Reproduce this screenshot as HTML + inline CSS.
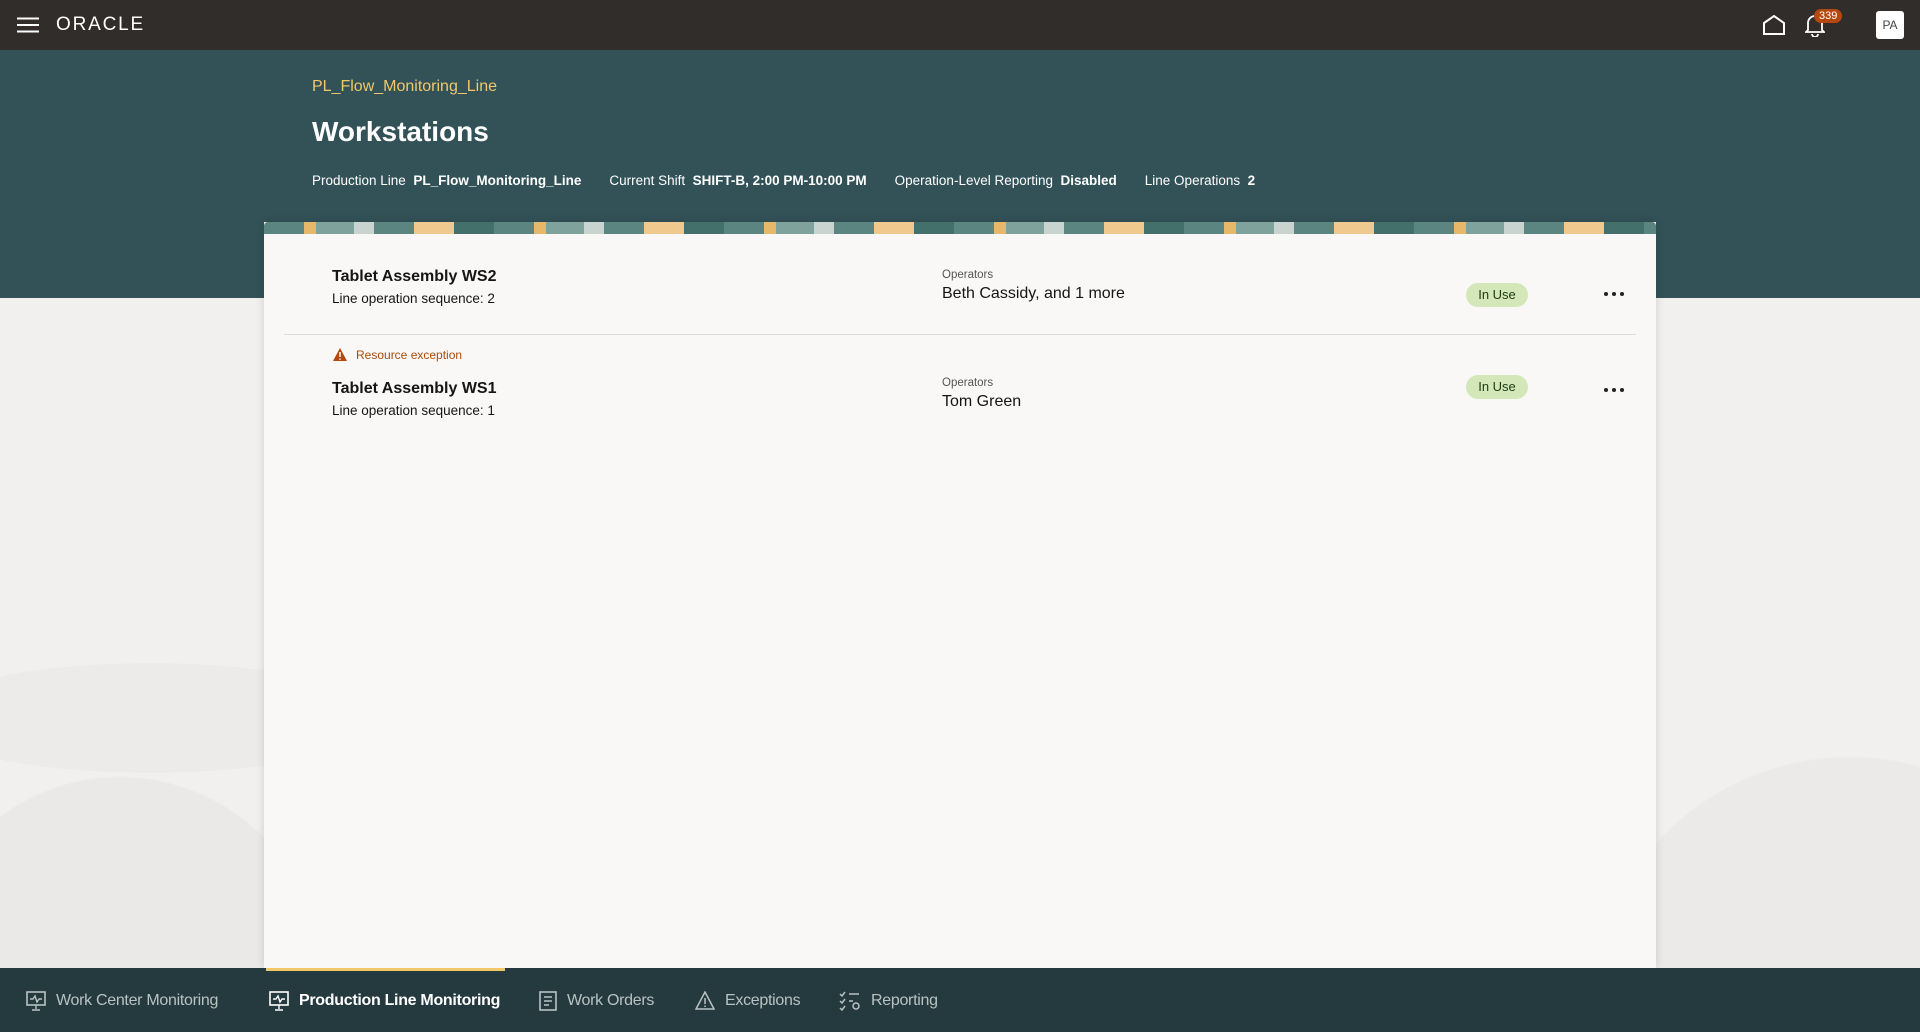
<!DOCTYPE html>
<html><head><meta charset="utf-8"><style>
*{box-sizing:border-box;margin:0;padding:0}
body{width:1920px;height:1032px;overflow:hidden;font-family:"Liberation Sans",sans-serif;background:#efeeec;position:relative}
.hdr{position:absolute;top:0;left:0;width:1920px;height:50px;background:#312d2a}
.band{position:absolute;top:50px;left:0;width:1920px;height:248px;background:#325258}
.bg{position:absolute;top:298px;left:0;width:1920px;height:670px;background:
radial-gradient(circle at 120px 680px,#eae9e7 0,#eae9e7 200px,transparent 202px),
radial-gradient(circle at 1850px 720px,#ebeae8 0,#ebeae8 260px,transparent 262px),
radial-gradient(ellipse at 150px 420px,#ecebe9 0,#ecebe9 230px,transparent 232px),#f1f0ee}
.t{position:absolute;white-space:nowrap}
.card{position:absolute;left:264px;top:222px;width:1392px;height:746px;background:#f9f8f6;box-shadow:0 0 8px rgba(0,0,0,.15)}
.ban{position:absolute;left:264px;top:222px;width:1392px;height:12px;background:repeating-linear-gradient(90deg,#5b8580 0 40px,#e8b86a 40px 52px,#7fa29d 52px 90px,#c9d3d0 90px 110px,#5b8580 110px 150px,#f0c98f 150px 190px,#44706b 190px 230px);border-radius:4px 4px 0 0}
.badge{position:absolute;width:62px;height:24px;border-radius:12px;background:#d4e7b8;color:#1d3a12;font-size:13px;text-align:center;line-height:24px}
.dots{position:absolute;width:22px;height:6px}
.dots i{position:absolute;top:0;width:4px;height:4px;border-radius:50%;background:#222}
.nav{position:absolute;top:968px;left:0;width:1920px;height:64px;background:#253a3f}
.ni{position:absolute;top:23px;font-size:16px;letter-spacing:-0.3px;color:#b9c2c3;display:flex;align-items:center;gap:10px;white-space:nowrap}
.ni.a{color:#fff;font-weight:bold}
</style></head><body>
<div class="hdr">
<svg style="position:absolute;left:17px;top:17px" width="22" height="16"><path d="M0 1.5h22M0 8h22M0 14.5h22" stroke="#fff" stroke-width="2"/></svg>
<div class="t" style="left:56px;top:14px;color:#fff;font-size:19px;letter-spacing:1.8px">ORACLE</div>
<svg style="position:absolute;left:1763px;top:15px" width="22" height="20"><path d="M1 19V8L11 1l10 7v11z" fill="none" stroke="#fff" stroke-width="2"/></svg>
<svg style="position:absolute;left:1805px;top:13px" width="20" height="24"><path d="M3 17V10a7 7 0 0 1 14 0v7l2 2H1z M7 21a3 3 0 0 0 6 0" fill="none" stroke="#fff" stroke-width="1.8"/></svg>
<div class="t" style="left:1814px;top:9px;background:#b5480f;color:#fff;font-size:11px;border-radius:8px;padding:1px 5px">339</div>
<div class="t" style="left:1876px;top:11px;width:28px;height:28px;background:#fff;border-radius:3px;color:#444;font-size:12px;text-align:center;line-height:28px">PA</div>
</div>
<div class="band"></div>
<div class="bg"></div>
<div class="t" style="left:312px;top:78px;color:#f0c86a;font-size:16px">PL_Flow_Monitoring_Line</div>
<div class="t" style="left:312px;top:116px;color:#fff;font-size:28px;font-weight:bold">Workstations</div>
<div class="t" style="left:312px;top:173px;color:#fff;font-size:13.5px">Production Line&nbsp;&nbsp;<b>PL_Flow_Monitoring_Line</b><span style="display:inline-block;width:28px"></span>Current Shift&nbsp;&nbsp;<b>SHIFT-B, 2:00 PM-10:00 PM</b><span style="display:inline-block;width:28px"></span>Operation-Level Reporting&nbsp;&nbsp;<b>Disabled</b><span style="display:inline-block;width:28px"></span>Line Operations&nbsp;&nbsp;<b>2</b></div>
<div class="card"></div>
<div class="ban"></div>
<div class="t" style="left:332px;top:268px;font-size:16px;font-weight:bold;color:#161513">Tablet Assembly WS2</div>
<div class="t" style="left:332px;top:291px;font-size:13.5px;color:#161513">Line operation sequence: 2</div>
<div class="t" style="left:942px;top:269px;font-size:11.5px;color:#555">Operators</div>
<div class="t" style="left:942px;top:285px;font-size:16px;color:#161513">Beth Cassidy, and 1 more</div>
<div class="badge" style="left:1466px;top:283px">In Use</div>
<div class="dots" style="left:1604px;top:292px"><i style="left:0"></i><i style="left:8px"></i><i style="left:16px"></i></div>
<div style="position:absolute;left:284px;top:334px;width:1352px;height:1px;background:#dedcd8"></div>
<svg style="position:absolute;left:333px;top:348px" width="14" height="13"><path d="M7 0L14 13H0z" fill="#b5480f"/><path d="M7 4v5M7 10.5v1.2" stroke="#fff" stroke-width="1.5"/></svg>
<div class="t" style="left:356px;top:348px;font-size:12px;color:#a84b0c">Resource exception</div>
<div class="t" style="left:332px;top:380px;font-size:16px;font-weight:bold;color:#161513">Tablet Assembly WS1</div>
<div class="t" style="left:332px;top:403px;font-size:13.5px;color:#161513">Line operation sequence: 1</div>
<div class="t" style="left:942px;top:377px;font-size:11.5px;color:#555">Operators</div>
<div class="t" style="left:942px;top:393px;font-size:16px;color:#161513">Tom Green</div>
<div class="badge" style="left:1466px;top:375px">In Use</div>
<div class="dots" style="left:1604px;top:388px"><i style="left:0"></i><i style="left:8px"></i><i style="left:16px"></i></div>
<div class="nav">
<div style="position:absolute;left:266px;top:0;width:239px;height:3px;background:#f0c86a"></div>
<div class="ni" style="left:26px"><svg width="20" height="20"><rect x="1" y="1" width="18" height="13" fill="none" stroke="currentColor" stroke-width="1.6"/><path d="M4 8h3l2-3 2 6 2-3h3M10 14v4M6 19h8" fill="none" stroke="currentColor" stroke-width="1.4"/></svg>Work Center Monitoring</div>
<div class="ni a" style="left:269px"><svg width="20" height="20"><rect x="1" y="1" width="18" height="13" fill="none" stroke="currentColor" stroke-width="1.6"/><path d="M4 8h3l2-3 2 6 2-3h3M10 14v4M6 19h8" fill="none" stroke="currentColor" stroke-width="1.4"/></svg>Production Line Monitoring</div>
<div class="ni" style="left:539px"><svg width="18" height="20"><rect x="1" y="1" width="16" height="18" fill="none" stroke="currentColor" stroke-width="1.6"/><path d="M5 6h8M5 10h8M5 14h5" stroke="currentColor" stroke-width="1.5"/></svg>Work Orders</div>
<div class="ni" style="left:695px"><svg width="20" height="19"><path d="M10 1L19 18H1z" fill="none" stroke="currentColor" stroke-width="1.5"/><path d="M10 7v6M10 14.5v1.5" stroke="currentColor" stroke-width="1.5"/></svg>Exceptions</div>
<div class="ni" style="left:839px"><svg width="22" height="20"><path d="M1 3l2 2 3-4M1 10l2 2 3-4M1 17l2 2 3-4M10 3h10M10 10h4" fill="none" stroke="currentColor" stroke-width="1.5"/><circle cx="17" cy="15" r="3" fill="none" stroke="currentColor" stroke-width="1.5"/></svg>Reporting</div>
</div>
</body></html>
